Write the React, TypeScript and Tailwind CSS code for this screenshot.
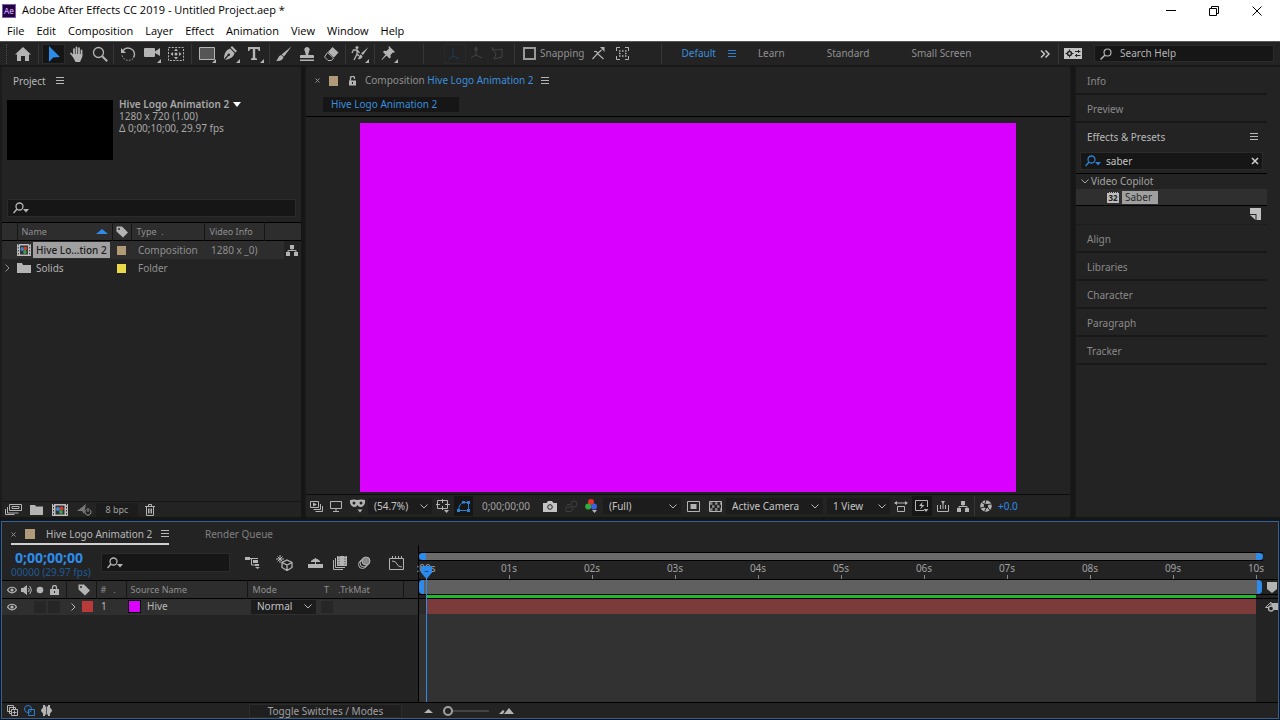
import type { ReactNode } from "react";

function Svg({ w = 16, h = 16, children }: { w?: number; h?: number; children: ReactNode }) {
  return (
    <svg width={w} height={h} viewBox={`0 0 ${w} ${h}`} fill="none" stroke="currentColor" className="shrink-0" aria-hidden="true">
      {children}
    </svg>
  );
}

function Tool({ label, className = "w-6", children }: { label: string; className?: string; children: ReactNode }) {
  return (
    <button type="button" aria-label={label} className={`flex h-5 shrink-0 items-center justify-center ${className}`}>
      {children}
    </button>
  );
}

function Sep({ className = "mx-0.5" }: { className?: string }) {
  return <span className={`h-5 w-px shrink-0 bg-[#363636] ${className}`} />;
}

const corner = <path d="M18 14v4h-4z" fill="currentColor" stroke="none" />;

function Hamburger() {
  return (
    <Svg w={8} h={8}>
      <path d="M0 .5h8M0 3.5h8M0 6.5h8" />
    </Svg>
  );
}

function Chevron() {
  return (
    <Svg w={8} h={5}>
      <path d="M.5.5 4 4 7.5.5" />
    </Svg>
  );
}

function ChevronRight() {
  return (
    <Svg w={5} h={8}>
      <path d="M.5.5 4 4 .5 7.5" />
    </Svg>
  );
}

function SearchIcon() {
  return (
    <Svg w={16} h={12}>
      <circle cx="6.5" cy="4.5" r="3.5" strokeWidth="1.3" />
      <path d="M4 7 .5 11" strokeWidth="1.5" />
      <path d="M10 7h6l-3 3.500z" fill="currentColor" stroke="none" />
    </Svg>
  );
}

function Tag() {
  return (
    <Svg w={12} h={12}>
      <path d="M.5.5h5.500L12 6.500 7 11.500.5 5.500z" fill="currentColor" stroke="none" />
      <circle cx="3" cy="3" r="1" fill="#2d2d2d" stroke="none" />
    </Svg>
  );
}

function Eye() {
  return (
    <Svg w={10} h={8}>
      <path d="M.5 4C2.500.3 7.500.3 9.500 4 7.500 7.700 2.500 7.700.5 4z" strokeWidth="1.2" />
      <circle cx="5" cy="4" r="1.600" fill="currentColor" stroke="none" />
    </Svg>
  );
}

function Flowchart() {
  return (
    <Svg w={12} h={11}>
      <path d="M4 0h4v4H4zM0 7h4v4H0zM8 7h4v4H8z" fill="currentColor" stroke="none" />
      <path d="M6 4v1.500M2 7V5.500h8V7" />
    </Svg>
  );
}

function CompIcon({ w }: { w: 14 | 16 }) {
  return (
    <svg width={w} height="12" viewBox="0 0 16 12" preserveAspectRatio="none" className="shrink-0" aria-hidden="true">
      <path d="M0 0h16v12H0z" fill="#bdbdbd" />
      <path d="M1.500 0v12M14.500 0v12" stroke="#333" strokeDasharray="1.500 1.500" />
      <path d="M3.500 1.500h9v9h-9z" fill="#333" />
      <circle cx="6" cy="5" r="2" fill="#3d8ad6" />
      <circle cx="9.500" cy="4.500" r="2" fill="#d83a2e" />
      <circle cx="9" cy="8" r="2" fill="#3a9e52" />
    </svg>
  );
}

function Select({ label, value, className }: { label: string; value: string; className: string }) {
  return (
    <span className={`flex shrink-0 items-center bg-[#1c1c1c] pr-1 ${className}`}>
      <select aria-label={label} className="min-w-0 flex-1 appearance-none bg-transparent pl-1.5 text-[10px] text-[#c4c4c4] outline-none">
        <option>{value}</option>
      </select>
      <Chevron />
    </span>
  );
}

function TitleBar() {
  return (
    <header className="bg-white font-['Open_Sans',sans-serif] text-[11px] text-black">
      <div className="flex h-[21px] items-center">
        <span className="ml-0.5 flex h-3.5 w-3.5 items-center justify-center border border-[#7d5fa8] bg-[#23003f] text-[8px] font-semibold text-[#c79bf5]">Ae</span>
        <h1 className="ml-1.5 flex-1">Adobe After Effects CC 2019 - Untitled Project.aep *</h1>
        <button type="button" aria-label="Minimize" className="flex w-[43px] justify-center">
          <Svg w={10} h={10}><path d="M0 4.500h10" /></Svg>
        </button>
        <button type="button" aria-label="Restore" className="flex w-[43px] justify-center">
          <Svg w={10} h={10}><path d="M.5 2.500h7v7h-7zM2.500 2.500v-2h7v7h-2" /></Svg>
        </button>
        <button type="button" aria-label="Close" className="flex w-[43px] justify-center">
          <Svg w={10} h={10}><path d="m.5.5 9 9m0-9-9 9" /></Svg>
        </button>
        <span className="w-0.5" />
      </div>
      <nav className="flex h-5 items-center gap-3 pl-[7px]">
        {["File", "Edit", "Composition", "Layer", "Effect", "Animation", "View", "Window", "Help"].map((m) => (
          <button type="button" key={m}>{m}</button>
        ))}
      </nav>
    </header>
  );
}

function Toolbar() {
  return (
    <div className="flex h-[26px] items-center border-t border-b-2 border-t-[#555] border-b-[#181818] bg-[#232323] text-[#b4b4b4]">
      <span className="ml-1.5 mr-1 h-5 shrink-0 border-l border-dotted border-[#4a4a4a]" />
      <Tool label="Home">
        <Svg><path d="m8 1 8 7.500h-2V15h-4v-5H6v5H2V8.500H0z" fill="currentColor" stroke="none" /></Svg>
      </Tool>
      <Sep className="mx-[3px]" />
      <Tool label="Selection" className="w-[23px] border border-[#2b2b2b] bg-[#151515] text-[#2d8ceb]">
        <Svg><path d="M3 0v16l4.200-4.500L14 11z" fill="currentColor" stroke="none" /></Svg>
      </Tool>
      <Tool label="Hand" className="w-[23px]">
        <Svg>
          <path d="M5 9V3.200M7.500 8V1.500M10 8V2.200M12.500 9V4.500M2 7.500 5 11" strokeWidth="1.800" strokeLinecap="round" />
          <path d="M4 8h9.300v3L11 16H6.500L3.500 10z" fill="currentColor" stroke="none" />
        </Svg>
      </Tool>
      <Tool label="Zoom" className="w-[23px]">
        <Svg><circle cx="6.500" cy="6.500" r="5" strokeWidth="1.300" /><path d="m10.200 10.200 5 5" strokeWidth="2" /></Svg>
      </Tool>
      <Sep />
      <Tool label="Rotation">
        <Svg>
          <path d="M3 4.500A6.500 6.500 0 0 1 14.500 8c0 1.500-.4 2.700-1 3.500" strokeWidth="1.400" />
          <path d="M13 12.500A6.500 6.500 0 0 1 2 9" strokeDasharray="1.500 1.500" />
          <path d="M1 2v5h5z" fill="currentColor" stroke="none" />
        </Svg>
      </Tool>
      <Tool label="Camera">
        <Svg w={19} h={18}>
          <path d="M1 4q0-1 1-1h9q1 0 1 1v2.500L17 3v8l-5-3v3q0 1-1 1H2q-1 0-1-1z" fill="currentColor" stroke="none" />
          {corner}
        </Svg>
      </Tool>
      <Tool label="Pan Behind">
        <Svg>
          <path d="M.5 1.500h15v13H.5z" strokeDasharray="2 1.300" />
          <path d="m8 2.500 2 2.500H6zM8 13.500 10 11H6zM2.500 8 5 6v4zM13.500 8 11 6v4z" fill="currentColor" stroke="none" />
          <circle cx="8" cy="8" r="1.500" fill="currentColor" stroke="none" />
        </Svg>
      </Tool>
      <Sep className="mx-[3px]" />
      <Tool label="Rectangle">
        <Svg w={19} h={18}><path d="M1.500 2.500h15v12h-15z" fill="#555" />{corner}</Svg>
      </Tool>
      <Tool label="Pen">
        <Svg w={19} h={18}>
          <path d="m10 1 5 5-1.500 1.500-5-5zM8 3.500 12.500 8c-.5 3.500-4 6-9.500 7l3.500-4a1.300 1.300 0 1 0-1-1L2 14c0-5.500 2-9 6-10.500z" fill="currentColor" stroke="none" />
          {corner}
        </Svg>
      </Tool>
      <Tool label="Type">
        <Svg w={19} h={18}>
          <path d="M2 2h12v4h-1.200q-.3-2-2-2H9.200v8.500q0 1 1.800 1V15H5v-1.500q1.800 0 1.800-1V4H5.200q-1.700 0-2 2H2z" fill="currentColor" stroke="none" />
          {corner}
        </Svg>
      </Tool>
      <Sep />
      <Tool label="Brush" className="w-[23px]">
        <Svg><path d="M15.500.5 8 10.500l-2.500-2zM5 9l2.500 2c-.5 3-3.500 4.500-7.500 4 2-1 2-5 5-6z" fill="currentColor" stroke="none" /></Svg>
      </Tool>
      <Tool label="Clone Stamp">
        <Svg><path d="M8 1a2.700 2.700 0 0 1 2 4.500L9.200 9H14q1 0 1 1v2H1v-2q0-1 1-1h4.800L6 5.500A2.700 2.700 0 0 1 8 1zM1 13.500h14V15H1z" fill="currentColor" stroke="none" /></Svg>
      </Tool>
      <Tool label="Eraser">
        <Svg><path d="m9.500 1 6 5.500-4.500 5L5 6z" fill="currentColor" stroke="none" /><path d="m4.500 6.500 6 5.500-2 2.500H5L1.500 11z" /></Svg>
      </Tool>
      <Sep />
      <Tool label="Roto Brush">
        <Svg w={19} h={18}>
          <circle cx="6" cy="2.500" r="1.500" fill="currentColor" stroke="none" />
          <path d="M1 8l1.500-3H6l2.500 3M6 5v4l-3 6M6 9l2 2" strokeWidth="1.300" />
          <path d="M17.500 2 12 10l-2-1.500zM9.500 9.500l2 1.500c0 2.500-2.500 3.500-5 3 1.500-.5 1.500-3.500 3-4.500z" fill="currentColor" stroke="none" />
          {corner}
        </Svg>
      </Tool>
      <Sep />
      <Tool label="Puppet Pin">
        <Svg w={19} h={18}>
          <path d="m9 1 6 6-1.200.8-1-.3-2.300 2.500.2 2.500-1.200 1L6.500 10.500 2 15l-.5-.5L5.500 9.500 3 7l1-1.200 2.500.2L9 3.500 8.500 2z" fill="currentColor" stroke="none" />
          {corner}
        </Svg>
      </Tool>
      <span className="w-5" />
      <Sep />
      <span className="w-[18px]" />
      <Tool label="Local Axis" className="w-[22px] border border-[#292929] text-[#1d3d5c]">
        <Svg><path d="M6 2v8l6 3M6 10l-4 3" /></Svg>
      </Tool>
      <Tool label="World Axis" className="w-[21px] text-[#444]">
        <Svg><path d="M7 2v7l6 3M7 9l-5 3M5.500 4 7 1l1.500 3z" /></Svg>
      </Tool>
      <Tool label="View Axis" className="w-[21px] text-[#444]">
        <Svg><path d="m2 3 4 1 6-1v8l-8 2 2-5zM2 1l1 3" /></Svg>
      </Tool>
      <span className="w-1" />
      <Sep />
      <label className="ml-1.5 flex items-center gap-1 text-[10px] text-[#909090]">
        <input type="checkbox" className="h-[13px] w-[13px] appearance-none border-2 border-[#9a9a9a]" />
        Snapping
      </label>
      <Tool label="Snap Edges" className="ml-0.5 w-6">
        <Svg w={13} h={13}><path d="m.5 12 5-5.500 6 5.500M5.500 6.500 9.500 3M2 4.500h2.500l1 2" strokeWidth="1.200" /><path d="M8 0h4.500v5z" fill="currentColor" stroke="none" /></Svg>
      </Tool>
      <Tool label="Snap Features">
        <Svg w={13} h={13}><path d="M.5 4V.5H4M9 .5h3.500V4M12.500 9v3.500H9M4 12.500H.5V9" /><path d="M3 4h1.500M6 4h1.500M9 4h1.500M3 6.500h1.500M9 6.500h1.500M3 9h1.500M6 9h1.500M9 9h1.500" strokeWidth="1.500" /></Svg>
      </Tool>
      <span className="w-6" />
      <Sep />
      <div className="flex min-w-0 flex-1 items-center text-[10px] text-[#909090]">
        <button type="button" className="ml-[18px] text-[#3b8fdc]">Default</button>
        <button type="button" aria-label="Workspace menu" className="ml-3 text-[#2d7fd0]"><Hamburger /></button>
        <button type="button" className="ml-[22px]">Learn</button>
        <button type="button" className="ml-[42px]">Standard</button>
        <button type="button" className="ml-[42px] whitespace-nowrap">Small Screen</button>
        <button type="button" aria-label="More workspaces" className="ml-auto mr-1.5 text-[#c4c4c4]">
          <Svg w={10} h={8}><path d="m1 .5 3.500 3.500L1 7.500M5.500.5 9 4 5.500 7.500" strokeWidth="1.500" /></Svg>
        </button>
      </div>
      <Sep />
      <Tool label="Sync Settings" className="ml-[3px] w-[18px] text-[#c4c4c4]">
        <Svg w={18} h={11}>
          <path d="M0 0h18v11H0z" fill="currentColor" stroke="none" />
          <circle cx="5.500" cy="5.500" r="2" stroke="#222" strokeWidth="1.500" />
          <path d="M5.500 1.500v8M1.500 5.500h8" stroke="#222" strokeDasharray="1.500 5" />
          <path d="M11 3.500h5.500M11 7.500h5.500M14.500 2v3M12.500 6v3" stroke="#222" />
        </Svg>
      </Tool>
      <label className="ml-3 mr-1.5 flex h-[17px] w-[180px] items-center gap-2 border border-[#2b2b2b] bg-[#161616] pl-[5px]">
        <Svg w={12} h={12}><circle cx="7.500" cy="4.500" r="3.500" strokeWidth="1.200" /><path d="m5 7-4.500 4.500" strokeWidth="1.500" /></Svg>
        <input aria-label="Search Help" placeholder="Search Help" className="w-full min-w-0 bg-transparent text-[10px] outline-none placeholder:text-[#b4b4b4]" />
      </label>
    </div>
  );
}

function ProjectPanel() {
  return (
    <section className="flex flex-col border-l-2 border-[#1b1b1b] bg-[#232323]">
      <div className="flex h-7 items-center gap-2.5 pl-[11px] text-[#b8b8b8]">
        <h2>Project</h2>
        <Hamburger />
      </div>
      <div className="flex gap-1.5 pl-[5px] pt-[3px]">
        <div className="mt-0.5 h-[60px] w-[106px] bg-black" />
        <div className="text-[10px] leading-3 text-[#a8a8a8]">
          <div className="flex items-center gap-1 font-semibold">
            Hive Logo Animation 2
            <Svg w={8} h={5}><path d="M0 0h8L4 5z" fill="#fff" stroke="none" /></Svg>
          </div>
          <div>1280 x 720 (1.00)</div>
          <div>Δ 0;00;10;00, 29.97 fps</div>
        </div>
      </div>
      <label className="mx-[5px] mt-[39px] flex h-[18px] items-center border border-[#2b2b2b] bg-[#161616] pl-[5px] text-[#b4b4b4]">
        <SearchIcon />
        <input aria-label="Search project" className="min-w-0 flex-1 bg-transparent text-[10px] outline-none" />
      </label>
      <table className="mt-[5px] w-full table-fixed border-collapse border-t border-black text-left text-[#909090]">
        <colgroup>
          <col className="w-[15px]" />
          <col className="w-[95px]" />
          <col className="w-[19px]" />
          <col className="w-[73px]" />
          <col className="w-[60px]" />
          <col />
        </colgroup>
        <thead>
          <tr className="h-[18px] border-b border-black bg-[#2d2d2d] text-[9px]">
            <th />
            <th className="border-l border-[#151515] p-0 font-normal">
              <span className="flex items-center justify-between pl-1 pr-1">
                Name
                <Svg w={12} h={5}><path d="M0 5h12L6 0z" fill="#2d8ceb" stroke="none" /></Svg>
              </span>
            </th>
            <th className="border-l border-[#151515] p-0 pl-[3px] text-[#b4b4b4]" aria-label="Label"><Tag /></th>
            <th className="border-l border-[#151515] p-0 pl-[5px] font-normal">Type&nbsp; .</th>
            <th className="border-x border-[#151515] p-0 pl-[5px] font-normal">Video Info</th>
            <th />
          </tr>
        </thead>
        <tbody className="text-[10px]">
          <tr className="h-[18px] bg-[#2d2d2d]">
            <td className="p-0" />
            <td className="p-0">
              <span className="flex items-center gap-0.5">
                <CompIcon w={14} />
                <span className="whitespace-nowrap bg-[#a0a0a0] px-[3px] font-medium leading-4 text-[#1c1c1c]">Hive Lo...tion 2</span>
              </span>
            </td>
            <td className="p-0 pl-[5px]"><span className="block h-[9px] w-[9px] bg-[#b09a78]" /></td>
            <td className="p-0 pl-[7px]">Composition</td>
            <td className="whitespace-nowrap p-0 pl-[7px]">1280 x _0)</td>
            <td className="p-0 text-[#b4b4b4]"><span className="ml-5 flex h-[18px] items-center justify-end bg-[#232323] pr-[3px]"><Flowchart /></span></td>
          </tr>
          <tr className="h-[18px]">
            <td className="p-0 pl-[3px]"><ChevronRight /></td>
            <td className="p-0 text-[#b4b4b4]">
              <span className="flex items-center gap-[5px]">
                <Svg w={14} h={10}><path d="M0 0h5l1 2h8v8H0z" fill="currentColor" stroke="none" /></Svg>
                Solids
              </span>
            </td>
            <td className="p-0 pl-[5px]"><span className="block h-[9px] w-[9px] bg-[#e8d84a]" /></td>
            <td className="p-0 pl-[7px]">Folder</td>
            <td />
            <td />
          </tr>
        </tbody>
      </table>
      <div className="mt-auto flex h-4 items-center border-t border-[#151515] text-[#b4b4b4]">
        <Tool label="Interpret Footage" className="h-3.5 w-[22px]">
          <Svg w={17} h={11}><path d="M4.500.5h12v6h-12zM2.500 3v6h11M.5 5v5.500h9M7 2.500h7v2H7z" /></Svg>
        </Tool>
        <Tool label="New Folder" className="h-3.5 w-6">
          <Svg w={13} h={10}><path d="M0 0h5l1 1.500h7V10H0z" fill="currentColor" stroke="none" /></Svg>
        </Tool>
        <Tool label="New Composition" className="h-3.5 w-6"><CompIcon w={16} /></Tool>
        <Tool label="Project Settings" className="h-3.5 w-6 text-[#777]">
          <Svg w={15} h={12}><path d="M0 7 9 0 7 10 5 7z" fill="currentColor" stroke="none" /><path d="M9.500 5.500a3 3 0 1 0 3 0M11 4v4" stroke="#999" /></Svg>
        </Tool>
        <button type="button" className="h-3.5 w-[42px] bg-[#1c1c1c] text-[9px] leading-3 text-[#a0a0a0]">8 bpc</button>
        <Tool label="Delete" className="h-3.5 w-6">
          <Svg w={10} h={12}><path d="M0 2.500h10M3.500 2V.5h3V2M1.500 3v8.500h7V3M3.500 4.500v5M5 4.500v5M6.500 4.500v5" /></Svg>
        </Tool>
      </div>
    </section>
  );
}

function CompositionPanel() {
  return (
    <section className="flex min-w-0 flex-col border-x border-[#1b1b1b] bg-[#232323]">
      <div className="flex h-[27px] items-center pl-[9px] text-[10px] text-[#909090]">
        <button type="button" aria-label="Close tab"><Svg w={5} h={5}><path d="m.5.5 4 4m0-4-4 4" /></Svg></button>
        <span className="ml-[9px] h-2.5 w-[9px] bg-[#b09a78]" />
        <span className="ml-2.5 text-[#b4b4b4]"><Svg w={9} h={10}><path d="M1 4.500h7V9.500H1z" fill="currentColor" stroke="none" /><path d="M2.500 5V2.500a2 2 0 0 1 4-.5v1" strokeWidth="1.300" /><path d="M4.500 6v2" stroke="#232323" /></Svg></span>
        <h2 className="ml-2">Composition <span className="text-[#3b8fdc]">Hive Logo Animation 2</span></h2>
        <button type="button" aria-label="Panel menu" className="ml-[7px] text-[#b4b4b4]"><Hamburger /></button>
      </div>
      <div className="border-b border-black pb-1 pl-[17px] pt-[3px]">
        <button type="button" className="block h-[15px] w-[136px] bg-[#161616] pl-2 text-left text-[10px] leading-[15px] text-[#3b8fdc]">Hive Logo Animation 2</button>
      </div>
      <div className="px-[54px] pt-1.5">
        <div className="aspect-video w-full bg-[#d900ff]" />
      </div>
      <div className="mt-0.5 flex h-[23px] items-center border-t border-[#0c0c0c] text-[#b4b4b4]">
        <Tool label="Always Preview" className="w-5"><Svg w={13} h={11}><path d="M.5.5h8v6h-8z" /><path d="M3 1.500 7 3.500l-4 2z" fill="currentColor" stroke="none" /><path d="M10.500 3v5.500h-7M12.500 5v5.500h-7" /></Svg></Tool>
        <Tool label="Primary Viewer" className="w-5"><Svg w={12} h={11}><path d="M.5.5h11v7H.5zM6 7v3M3 10.500h6" /></Svg></Tool>
        <Tool label="3D Glasses" className="w-[22px]"><Svg w={15} h={14}><path d="M0 1q4-1 7.500 0Q11 0 15 1v3q-1.500 4-4.500 4-2 0-3-2-1 2-3 2Q1.500 8 0 4z" fill="currentColor" stroke="none" /><circle cx="4" cy="4" r="1.500" fill="#232323" stroke="none" /><circle cx="11" cy="4" r="1.500" fill="#232323" stroke="none" /><path d="M7.500 10.500h5L10 13.500z" fill="currentColor" stroke="none" /></Svg></Tool>
        <Select label="Magnification" value="(54.7%)" className="h-4 w-16" />
        <Tool label="Grid and Guides" className="w-[22px]"><Svg w={14} h={14}><path d="M1.500 1.500h10v8h-10zM6.500 0v4M6.500 7v4M0 5.500h4M9 5.500h5" /><path d="M8 11h5l-2.500 3z" fill="currentColor" stroke="none" /></Svg></Tool>
        <Tool label="Mask Visibility" className="w-[19px] bg-[#161616] text-[#2d7fd0]"><Svg w={13} h={12}><path d="M1.500 10.500q.5-7 5-8h5v8z" /><path d="M0 9h3v3H0zM10 9h3v3h-3zM10 1h3v3h-3zM5 1h3v2.500H5z" fill="currentColor" stroke="none" /></Svg></Tool>
        <button type="button" className="w-[66px] text-[10px] text-[#a0a0a0]">0;00;00;00</button>
        <Tool label="Take Snapshot" className="w-[22px] text-[#c4c4c4]"><Svg w={14} h={11}><path d="M0 2h3.500L5 0h4l1.500 2H14v9H0z" fill="currentColor" stroke="none" /><circle cx="7" cy="6" r="2.300" stroke="#232323" /></Svg></Tool>
        <Tool label="Show Snapshot" className="w-5 text-[#3f3f3f]"><Svg w={13} h={12}><circle cx="9" cy="4" r="3" /><path d="M2 4.500h3M1 7h5l2 2-2 2.500H1z" /></Svg></Tool>
        <Tool label="Channels" className="w-[22px]"><Svg w={14} h={14}><g stroke="none"><circle cx="6" cy="3" r="3" fill="#e23127" /><circle cx="3.200" cy="7.500" r="3" fill="#2fae3c" /><circle cx="9" cy="7.500" r="3" fill="#3c63dd" /><path d="M7 11h5l-2.500 3z" fill="currentColor" /></g></Svg></Tool>
        <Select label="Resolution" value="(Full)" className="h-4 w-[78px]" />
        <Tool label="Region of Interest" className="w-[25px]"><Svg w={13} h={11}><path d="M.5.5h12v10H.5z" /><path d="M3.500 3h6v5h-6z" fill="currentColor" stroke="none" /></Svg></Tool>
        <Tool label="Transparency Grid" className="w-[18px]"><Svg w={13} h={11}><path d="M.5.5h12v10H.5z" /><path d="M1 2.500h11M3 5.500h11M1 8.500h11" strokeWidth="2.500" strokeDasharray="2.500 2.500" opacity=".7" /></Svg></Tool>
        <Select label="3D View" value="Active Camera" className="ml-0.5 h-4 w-[97px]" />
        <Select label="View Layout" value="1 View" className="ml-1 h-4 w-[63px]" />
        <Tool label="Pixel Aspect" className="w-[22px]"><Svg w={14} h={11}><path d="M1 2h12M3.500 5.500h7v5h-7z" /><path d="M3 0v4L0 2zM11 0v4l3-2z" fill="currentColor" stroke="none" /></Svg></Tool>
        <Tool label="Fast Previews" className="w-5 bg-[#161616]"><Svg w={14} h={13}><path d="M9 10.500H.5V.5h12V7" /><path d="M7.500 2 4 6h2.500L5 9.500 9.500 5H7zM8.500 9h5L11 12z" fill="currentColor" stroke="none" /></Svg></Tool>
        <Tool label="Timeline" className="w-[22px]"><Svg w={12} h={11}><path d="M.5 4v6.500h11V4M3.500 4v4M8.500 4v4M6 2v6" /><path d="M4 0h4L6 3z" fill="currentColor" stroke="none" /></Svg></Tool>
        <Tool label="Composition Flowchart" className="w-[18px]"><Flowchart /></Tool>
        <Sep />
        <Tool label="Reset Exposure" className="w-[18px]"><Svg w={12} h={12}><circle cx="6" cy="6" r="4" strokeWidth="3.500" /><path d="M6 0 4.500 5M11.500 4 7 4.500M10 10.500 7.500 7M4.500 11.500l2-4M.5 8l4-1M1.500 2 5 5" stroke="#232323" /></Svg></Tool>
        <button type="button" className="ml-[3px] text-[10px] text-[#2d8ceb]">+0.0</button>
      </div>
    </section>
  );
}

function SideTab({ name }: { name: string }) {
  return <button type="button" className="block h-7 w-full border-b-2 border-[#181818] pl-[11px] pt-0.5 text-left text-[10px] text-[#8a8a8a]">{name}</button>;
}

function SidePanels() {
  return (
    <aside className="border-l border-[#1b1b1b] bg-[#232323] pr-[13px]">
      <SideTab name="Info" />
      <SideTab name="Preview" />
      <section>
        <div className="flex h-7 items-center justify-between pl-[11px] pr-[9px] text-[10px] text-[#b8b8b8]">
          <h2>Effects &amp; Presets</h2>
          <Hamburger />
        </div>
        <div className="mx-1 mt-px flex h-[18px] items-center border border-[#2b2b2b] bg-[#161616] pl-1 pr-[3px]">
          <span className="text-[#2d7fd0]"><SearchIcon /></span>
          <input aria-label="Search effects" defaultValue="saber" className="min-w-0 flex-1 bg-transparent pl-[5px] text-[10px] text-[#c4c4c4] outline-none" />
          <button type="button" aria-label="Clear search" className="text-[#d0d0d0]"><Svg w={8} h={8}><path d="m1 1 6 6m0-6-6 6" strokeWidth="1.500" /></Svg></button>
        </div>
        <ul className="mt-[3px] border-y border-black text-[10px] text-[#a4a4a4]">
          <li className="flex h-[15px] items-center gap-0.5 pl-[5px]"><Chevron />Video Copilot</li>
          <li className="flex h-4 items-center gap-[3px] bg-[#2f2f2f] pl-[31px]">
            <span className="flex h-[11px] w-3 items-center justify-center border-t border-dotted border-[#2f2f2f] bg-[#bdbdbd] text-[8px] font-bold leading-none text-[#222]">32</span>
            <span className="w-9 bg-[#a0a0a0] pl-[3px] leading-[13px] text-[#2a2a2a]">Saber</span>
          </li>
        </ul>
        <div className="flex h-[19px] items-center justify-end border-b border-[#1c1c1c] pb-0.5 pr-1.5 text-[#c0c0c0]">
          <Svg w={12} h={12}><path d="M1 0h11v12H7.500V6H1z" fill="currentColor" stroke="none" /><path d="M1 7h5.500v5z" fill="currentColor" stroke="none" /></Svg>
        </div>
      </section>
      {["Align", "Libraries", "Character", "Paragraph", "Tracker"].map((n) => (
        <SideTab key={n} name={n} />
      ))}
    </aside>
  );
}

function LayerControls() {
  return (
    <div className="flex w-[417px] shrink-0 flex-col border-r border-black">
      <div className="flex h-[35px] items-center">
        <div className="w-[99px] pl-[9px] pt-1 leading-[14px]">
          <div className="pl-1 text-[14px] font-bold leading-[14px] text-[#2d8ceb]">0;00;00;00</div>
          <div className="whitespace-nowrap text-[10px] leading-[14px] text-[#1f5a96]">00000 (29.97 fps)</div>
        </div>
        <label className="flex h-[19px] w-[129px] items-center border border-[#2b2b2b] bg-[#161616] pl-[5px] text-[#b4b4b4]">
          <SearchIcon />
          <input aria-label="Search layers" className="min-w-0 flex-1 bg-transparent text-[10px] outline-none" />
        </label>
        <div className="flex pl-[7px] text-[#b4b4b4]">
          <Tool label="Mini-Flowchart" className="w-[31px]"><Svg w={15} h={13}><path d="M0 1h5v3H0zM8 4h5v3H8zM10 8h4v2h-4z" fill="currentColor" stroke="none" /><path d="M5 2.500h8M6.500 3v6H11" /><path d="M10 11h5l-2.500 2z" fill="currentColor" stroke="none" /></Svg></Tool>
          <Tool label="Draft 3D" className="w-8"><Svg w={17} h={16}><path d="m11 5 5 2.500v5L11 15.500 6 12.500v-5zM6 7.500l5 2.500 5-2.500M11 10v5.500" strokeWidth="1.300" /><path d="M4 0v8M0 4h8M1.500 1.500l5 5M6.500 1.500l-5 5" /></Svg></Tool>
          <Tool label="Hide Shy Layers" className="w-[30px]"><Svg w={15} h={12}><path d="M0 7h15v4H0z" fill="currentColor" stroke="none" /><path d="M3 4.500q4.500-5 9 0zM7.500 1v9" fill="currentColor" /></Svg></Tool>
          <Tool label="Frame Blending" className="w-5"><Svg w={14} h={14}><path d="M4 0h10v10H4z" fill="currentColor" stroke="none" /><path d="M2.500 2v9.500H12M.5 4v9.500H10" /><path d="M6 0v10M12 0v10" stroke="#333" strokeDasharray="1 1.500" /></Svg></Tool>
          <Tool label="Motion Blur" className="w-7"><Svg w={14} h={14}><circle cx="5.500" cy="8.500" r="4" /><circle cx="7" cy="7" r="4" /><circle cx="9" cy="5" r="4" fill="#888" /></Svg></Tool>
          <Tool label="Graph Editor" className="w-9"><Svg w={15} h={14}><path d="M.5 2.500h14v11H.5zM3 5q4 0 5 3t5 3M3.500 0v2.500M6.500 0v2.500M9.500 0v2.500M12.500 0v2.500" /></Svg></Tool>
        </div>
      </div>
      <table className="w-full table-fixed border-collapse text-left text-[9px] text-[#909090]">
        <colgroup>
          <col className="w-[64px]" />
          <col className="w-[30px]" />
          <col className="w-[30px]" />
          <col className="w-[121px]" />
          <col className="w-[71px]" />
          <col className="w-[85px]" />
          <col />
        </colgroup>
        <thead>
          <tr className="h-[18px] border-y border-black bg-[#2d2d2d]">
            <th className="p-0 text-[#b4b4b4]">
              <span className="flex items-center gap-1 pl-[5px]">
                <Eye />
                <Svg w={11} h={10}><path d="M0 3h2l4-3v10L2 7H0z" fill="currentColor" stroke="none" /><path d="M7.500 3q1.500 2 0 4M8.500 1q3.500 4 0 8" /></Svg>
                <Svg w={8} h={8}><circle cx="4" cy="4" r="3.300" fill="currentColor" stroke="none" /></Svg>
                <span className="pl-0.5"><Svg w={9} h={10}><path d="M0 4h9v6H0z" fill="currentColor" stroke="none" /><path d="M2.500 4V2.500a2 2 0 0 1 4 0V4" strokeWidth="1.300" /><path d="M4.500 6v2" stroke="#2d2d2d" /></Svg></span>
              </span>
            </th>
            <th className="border-l border-[#151515] p-0 pl-[11px] text-[#b4b4b4]" aria-label="Label"><Tag /></th>
            <th className="whitespace-nowrap border-l border-[#151515] p-0 pl-1 font-normal"># &nbsp;&nbsp;.</th>
            <th className="border-l border-[#151515] p-0 pl-1 font-normal">Source Name</th>
            <th className="border-l border-[#151515] p-0 pl-[5px] font-normal">Mode</th>
            <th className="border-r border-[#151515] p-0 pl-1.5 font-normal">T &nbsp;&nbsp; .TrkMat</th>
            <th />
          </tr>
        </thead>
        <tbody className="text-[10px] text-[#b8b8b8]">
          <tr className="h-4 bg-[#2f2f2f]">
            <td className="p-0">
              <span className="flex items-center pl-[5px]">
                <Eye />
                <span className="ml-[17px] h-3 w-3 bg-[#262626]" />
                <span className="ml-0.5 h-3 w-3 bg-[#262626]" />
              </span>
            </td>
            <td className="p-0"><span className="flex items-center gap-1.5 pl-[5px]"><ChevronRight /><span className="h-[11px] w-[11px] bg-[#b83a3a]" /></span></td>
            <td className="p-0 pl-[5px]">1</td>
            <td className="p-0"><span className="flex items-center gap-1.5 pl-0.5"><span className="h-[13px] w-[13px] border border-black bg-[#d900ff]" />Hive</span></td>
            <td className="p-0"><span className="flex h-[14px] items-center pl-1"><Select label="Blending mode" value="Normal" className="h-3.5 w-[65px]" /></span></td>
            <td className="p-0"><span className="ml-[3px] block h-3 w-3 bg-[#262626]" /></td>
            <td className="p-0" />
          </tr>
        </tbody>
      </table>
    </div>
  );
}

const seconds = [":00s", "01s", "02s", "03s", "04s", "05s", "06s", "07s", "08s", "09s", "10s"];

function Tracks() {
  return (
    <div className="relative flex min-w-0 flex-1 flex-col">
      <div className="mr-[15px] mt-[7px] flex h-[9px] border-y border-black bg-[#232323]">
        <span className="w-[7px] rounded-l-full bg-[#2d8ceb]" />
        <span className="flex-1 bg-[#6b6b6b]" />
        <span className="w-[7px] rounded-r-full bg-[#2d8ceb]" />
      </div>
      <div className="flex h-[18px] justify-between pl-[7px] pr-[22px]">
        {seconds.map((s) => (
          <span key={s} className="flex w-0 flex-col items-center text-[10px] leading-[14px] text-[#a0a0a0]">
            {s}
            <span className="h-1 w-px bg-[#888]" />
          </span>
        ))}
      </div>
      <div className="flex h-4 items-center border-y border-black">
        <span className="h-3.5 w-[5px] rounded-l bg-[#2d8ceb]" />
        <span className="h-3.5 flex-1 bg-[#606060]" />
        <span className="mr-4 h-3.5 w-[5px] rounded-r bg-[#2d8ceb]" />
        <span className="-ml-3 flex w-3 justify-center text-[#b4b4b4]"><Svg w={10} h={11}><path d="M0 0h10v7l-5 4-5-4z" fill="currentColor" stroke="none" /></Svg></span>
      </div>
      <div className="ml-[7px] mr-[22px] h-[3px] bg-[#1fb82e]" />
      <div className="flex h-4 items-center border-t border-black">
        <span className="h-[15px] w-[7px] bg-[#2b2b2b]" />
        <span className="h-[15px] flex-1 bg-[#7b3b3b]" />
        <span className="flex w-[22px] justify-end text-[#b4b4b4]"><Svg w={13} h={11}><path d="M6 2h7v7H8z" fill="currentColor" stroke="none" /><path d="M6 1 .5 6.500H4M6 1v3" /><circle cx="6" cy="7.500" r="2.500" fill="#232323" strokeWidth="1.300" /></Svg></span>
      </div>
      <div className="mr-[22px] flex-1 bg-[#323232]" />
      <div className="absolute bottom-0 left-0.5 top-[21px] flex flex-col items-center text-[#2d8ceb]">
        <Svg w={11} h={13}><path d="M0 0h11v6.500L5.500 13 0 6.500z" fill="currentColor" stroke="none" /><path d="M3.500 5.500h4" stroke="#174a7d" /></Svg>
        <span className="w-px flex-1 bg-[#2d8ceb]" />
      </div>
    </div>
  );
}

function Timeline() {
  return (
    <section className="mx-px flex flex-1 flex-col border border-[#2f6296] bg-[#232323]">
      <div className="flex h-[23px] text-[10px]">
        <div className="ml-[9px] flex w-[158px] items-center border-b-2 border-[#d0d0d0] pt-[3px] text-[#b8b8b8]">
          <button type="button" aria-label="Close timeline" className="text-[#909090]"><Svg w={5} h={5}><path d="m.5.5 4 4m0-4-4 4" /></Svg></button>
          <span className="ml-[9px] h-2.5 w-2.5 bg-[#b09a78]" />
          <h2 className="ml-[11px] flex-1 whitespace-nowrap">Hive Logo Animation 2</h2>
          <Hamburger />
        </div>
        <button type="button" className="ml-9 pt-0.5 text-[#808080]">Render Queue</button>
      </div>
      <div className="flex flex-1">
        <LayerControls />
        <Tracks />
      </div>
      <div className="flex h-4 items-center border-t border-black text-[#b4b4b4]">
        <Tool label="Layer Switches" className="ml-0.5 h-3.5 w-[17px]"><Svg w={11} h={11}><path d="M.5.5h6v6h-6zM2.500 2.500h6v6h-6z" /><path d="M4.500 4.500h6v6h-6z" fill="#232323" /><path d="M5.500 7.500h4M7.500 5.500v4" /></Svg></Tool>
        <Tool label="Transfer Controls" className="h-3.5 w-[17px] text-[#2d7fd0]"><Svg w={11} h={11}><circle cx="4" cy="4" r="3.500" /><path d="M4.500 4.500h6v6h-6z" /></Svg></Tool>
        <Tool label="In and Out" className="h-3.5 w-[17px]"><Svg w={11} h={11}><path d="M2 0h2v1.500h3V0h2v2.500L11 5v1L9 8.500V11H7V9.500H4V11H2V8.500L0 6V5l2-2.500z" fill="currentColor" stroke="none" /><path d="M5.500 1v9" stroke="#555" /></Svg></Tool>
        <button type="button" className="ml-[194px] h-3.5 w-[153px] border border-[#2b2b2b] bg-[#1f1f1f] text-[10px] leading-3 text-[#a0a0a0]">Toggle Switches / Modes</button>
        <span className="ml-[22px]"><Svg w={9} h={4}><path d="m0 4 4.500-4L9 4z" fill="currentColor" stroke="none" /></Svg></span>
        <input
          type="range"
          aria-label="Timeline zoom"
          defaultValue={0}
          className="ml-2.5 h-2.5 w-[46px] appearance-none bg-transparent [&::-webkit-slider-runnable-track]:h-0.5 [&::-webkit-slider-runnable-track]:bg-[#444] [&::-webkit-slider-thumb]:-mt-1 [&::-webkit-slider-thumb]:h-2.5 [&::-webkit-slider-thumb]:w-2.5 [&::-webkit-slider-thumb]:appearance-none [&::-webkit-slider-thumb]:rounded-full [&::-webkit-slider-thumb]:border-2 [&::-webkit-slider-thumb]:border-[#a0a0a0] [&::-webkit-slider-thumb]:bg-[#232323]"
        />
        <span className="ml-[10px]"><Svg w={15} h={6}><path d="m0 6 4-4 1.500 1L4 6zM5 6l5-6 5 6z" fill="currentColor" stroke="none" /></Svg></span>
      </div>
    </section>
  );
}

export default function App() {
  return (
    <div className="flex min-h-screen flex-col bg-[#161616] font-['Noto_Sans',sans-serif] text-[10px] leading-normal">
      <TitleBar />
      <Toolbar />
      <main className="flex flex-1 flex-col gap-1">
        <div className="grid grid-cols-[301px_minmax(0,1fr)_205px] gap-1">
          <ProjectPanel />
          <CompositionPanel />
          <SidePanels />
        </div>
        <Timeline />
      </main>
      <div className="h-px bg-[#111]" />
    </div>
  );
}
